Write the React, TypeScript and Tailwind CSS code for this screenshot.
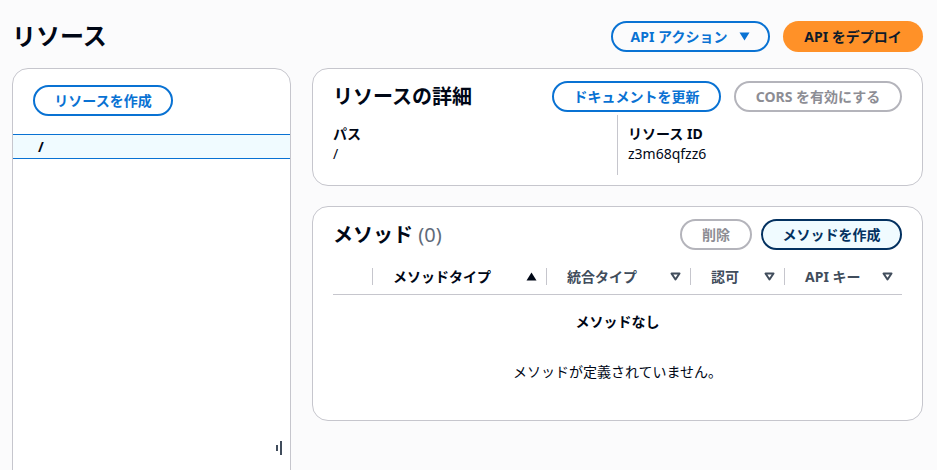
import React from 'react';

const FONT = { fontFamily: '"Noto Sans", "Noto Sans CJK JP", sans-serif' };

function SortDown() {
  return (
    <svg width="11" height="9" viewBox="0 0 11 9" className="shrink-0">
      <path d="M1.5 1.5 H9.5 L5.5 7.5 Z" fill="none" stroke="#414d5c" strokeWidth="2" strokeLinejoin="round" />
    </svg>
  );
}

function SortUp() {
  return (
    <svg width="11" height="9" viewBox="0 0 11 9" className="shrink-0">
      <path d="M0.5 8.5 H10.5 L5.5 0.5 Z" fill="#000716" />
    </svg>
  );
}

const columns = [
  { label: 'メソッドタイプ', width: 'w-[174px]', sorted: true },
  { label: '統合タイプ', width: 'w-[144px]', sorted: false },
  { label: '認可', width: 'w-[94px]', sorted: false },
  { label: 'API キー', width: 'flex-1', sorted: false },
];

export default function App() {
  return (
    <div style={FONT} className="min-h-screen bg-[#fbfbfc] text-[#000716] pl-3 pr-[14px] pt-[21px]">
      {/* page header */}
      <div className="flex items-center justify-between h-[30px]">
        <h1 className="text-[24px] font-bold leading-none">リソース</h1>
        <div className="flex items-center gap-[13px]">
          <button className="h-[31px] w-[159px] rounded-full border-2 border-[#0972d3] text-[#0972d3] text-[14px] font-bold flex items-center justify-center gap-[12px]">
            API アクション
            <svg width="11" height="9" viewBox="0 0 11 9"><path d="M0.5 0.5 H10.5 L5.5 8.5 Z" fill="#0972d3" /></svg>
          </button>
          <button className="h-[31px] w-[140px] rounded-full bg-[#ff9128] text-[#0f1b2a] text-[14px] font-bold">
            API をデプロイ
          </button>
        </div>
      </div>

      <div className="flex gap-[21px] mt-[17px]">
        {/* resource tree */}
        <div className="relative w-[279px] h-[420px] shrink-0 bg-white border border-[#c6c6cd] rounded-[16px]">
          <div className="pl-[20px] pt-[16px]">
            <button className="h-[31px] w-[140px] rounded-full border-2 border-[#0972d3] text-[#0972d3] text-[14px] font-bold">
              リソースを作成
            </button>
          </div>
          <div className="mt-[18px] h-[25px] border-y border-[#0972d3] bg-[#f0fbff] pl-[25px] flex items-center text-[14px] font-bold">
            /
          </div>
          <div className="absolute left-[263px] top-[372px] flex items-center gap-[2px]">
            <div className="w-[2px] h-[6px] bg-[#414d5c]" />
            <div className="w-[2px] h-[14px] bg-[#414d5c]" />
          </div>
        </div>

        <div className="flex-1 flex flex-col gap-[20px]">
          {/* resource details */}
          <div className="bg-white border border-[#c6c6cd] rounded-[16px] px-[20px] pt-[12px] pb-[10px]">
            <div className="flex items-center justify-between h-[31px]">
              <h2 className="text-[20px] font-bold">リソースの詳細</h2>
              <div className="flex gap-[13px]">
                <button className="h-[31px] w-[169px] rounded-full border-2 border-[#0972d3] text-[#0972d3] text-[14px] font-bold">
                  ドキュメントを更新
                </button>
                <button className="h-[31px] w-[168px] rounded-full border-2 border-[#b4b4bb] text-[#8d8d94] text-[14px] font-bold">
                  CORS を有効にする
                </button>
              </div>
            </div>
            <div className="flex mt-[3px] h-[60px]">
              <div className="w-[284px] pt-[9px] text-[14px] leading-[20px]">
                <div className="font-bold">パス</div>
                <div>/</div>
              </div>
              <div className="border-l border-[#c6c6cd] pl-[10px] pt-[9px] text-[14px] leading-[20px]">
                <div className="font-bold">リソース ID</div>
                <div>z3m68qfzz6</div>
              </div>
            </div>
          </div>

          {/* methods */}
          <div className="bg-white border border-[#c6c6cd] rounded-[16px] px-[20px] pt-[12px] h-[215px]">
            <div className="flex items-center justify-between h-[31px]">
              <h2 className="text-[20px] font-bold">
                メソッド <span className="font-normal text-[#5f6b7a]">(0)</span>
              </h2>
              <div className="flex gap-[9px]">
                <button className="h-[31px] w-[72px] rounded-full border-2 border-[#b4b4bb] text-[#8d8d94] text-[14px] font-bold">
                  削除
                </button>
                <button className="h-[31px] w-[141px] rounded-full border-2 border-[#033160] bg-[#f0fbff] text-[#033160] text-[14px] font-bold">
                  メソッドを作成
                </button>
              </div>
            </div>

            <div className="mt-[8px] flex items-center h-[37px] border-b border-[#c6c6cd]">
              <div className="w-[39px] shrink-0" />
              {columns.map((c) => (
                <div key={c.label} className={`${c.width} shrink-0 flex items-center h-[17px] border-l border-[#c6c6cd] pl-[20px] pr-[9px]`}>
                  <span className="flex-1 text-[14px] font-bold text-[#414d5c] whitespace-nowrap">
                    <span className={c.sorted ? 'text-[#000716]' : ''}>{c.label}</span>
                  </span>
                  {c.sorted ? <SortUp /> : <SortDown />}
                </div>
              ))}
            </div>

            <div className="flex flex-col items-center text-[14px]">
              <div className="mt-[16px] font-bold">メソッドなし</div>
              <div className="mt-[29px]">メソッドが定義されていません。</div>
            </div>
          </div>
        </div>
      </div>
    </div>
  );
}
